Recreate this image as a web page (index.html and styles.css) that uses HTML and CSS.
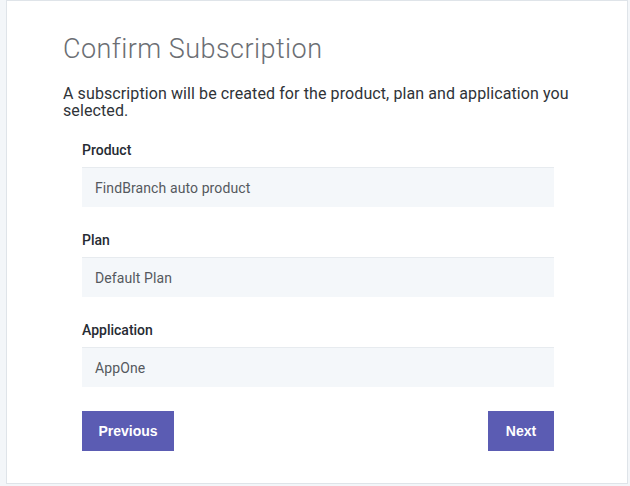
FILE: index.html
```html
<!DOCTYPE html>
<html>
<head>
<meta charset="utf-8">
<link rel="stylesheet" href="styles.css">
</head>
<body>
<div class="card">
  <h1 class="title">Confirm Subscription</h1>
  <p class="intro">A subscription will be created for the product, plan and application you selected.</p>
  <div class="form">
    <div class="group">
      <div class="label">Product</div>
      <div class="field">FindBranch auto product</div>
    </div>
    <div class="group">
      <div class="label">Plan</div>
      <div class="field">Default Plan</div>
    </div>
    <div class="group">
      <div class="label">Application</div>
      <div class="field">AppOne</div>
    </div>
    <div class="actions">
      <button class="btn btn-prev">Previous</button>
      <button class="btn btn-next">Next</button>
    </div>
  </div>
</div>
</body>
</html>
```
FILE: styles.css
```css
html, body {
  margin: 0;
  padding: 0;
}
body {
  background: #f3f6f9;
  width: 630px;
  height: 486px;
  overflow: hidden;
  font-family: Roboto, "Noto Sans", sans-serif;
}
.card {
  box-sizing: border-box;
  margin-left: 6px;
  width: 622px;
  height: 484px;
  background: #ffffff;
  border: 1px solid #dfe4e9;
  padding: 31px 56px 0 56px;
}
.title {
  margin: 0;
  font-size: 27px;
  font-weight: 300;
  color: #6b6e73;
  line-height: 34px;
  letter-spacing: 0.45px;
}
.intro {
  margin: 19px 0 0 0;
  font-size: 16px;
  line-height: 17px;
  color: #2f3338;
  width: 520px;
  letter-spacing: 0.1px;
}
.form {
  width: 472px;
  margin: 22px 0 0 19px;
}
.group {
  margin-bottom: 24px;
}
.label {
  font-size: 14px;
  font-weight: 500;
  color: #262b33;
  line-height: 18px;
  margin-bottom: 8px;
}
.field {
  height: 40px;
  box-sizing: border-box;
  background: #f4f7fa;
  border-top: 1px solid #e7ebef;
  padding: 0 13px;
  display: flex;
  align-items: center;
  font-size: 14px;
  color: #55595e;
  letter-spacing: 0.1px;
}
.actions {
  display: flex;
  justify-content: space-between;
  margin-top: 0;
}
.btn {
  height: 40px;
  border: none;
  background: #5b5cb3;
  color: #ffffff;
  font-family: "Liberation Sans", Arial, sans-serif;
  font-weight: 700;
  font-size: 14px;
  padding: 0;
}
.btn-prev { width: 92px; }
.btn-next { width: 66px; }
```
